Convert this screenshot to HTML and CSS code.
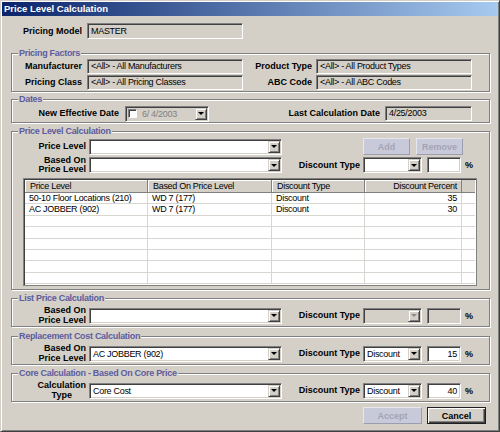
FILE: index.html
```html
<!DOCTYPE html>
<html>
<head>
<meta charset="utf-8">
<title>Price Level Calculation</title>
<link rel="stylesheet" href="styles.css">
</head>
<body>
<div class="window">
  <div class="titlebar">Price Level Calculation</div>
  <div class="content">
    <div class="row model">
      <span class="lbl w71">Pricing Model</span>
      <div class="field ro h16 w156 ml5">MASTER</div>
    </div>

    <fieldset class="group g-factors">
      <legend>Pricing Factors</legend>
      <div class="row r15">
        <span class="lbl w70">Manufacturer</span>
        <div class="field ro w156 ml5">&lt;All&gt; - All Manufacturers</div>
        <span class="lbl w69">Product Type</span>
        <div class="field ro w156 ml4">&lt;All&gt; - All Product Types</div>
      </div>
      <div class="row r15 mt1">
        <span class="lbl w70">Pricing Class</span>
        <div class="field ro w156 ml5">&lt;All&gt; - All Pricing Classes</div>
        <span class="lbl w69">ABC Code</span>
        <div class="field ro w156 ml4">&lt;All&gt; - All ABC Codes</div>
      </div>
    </fieldset>

    <fieldset class="group g-dates">
      <legend>Dates</legend>
      <div class="row r15">
        <span class="lbl w107">New Effective Date</span>
        <div class="combo dtp w84 ml6"><span class="chk"></span><span class="val dt">6/ 4/2003</span><span class="arrow"></span></div>
        <span class="lbl w171">Last Calculation Date</span>
        <div class="field ro w87 ml5">4/25/2003</div>
      </div>
    </fieldset>

    <fieldset class="group g-calc">
      <legend>Price Level Calculation</legend>
      <div class="row r17">
        <span class="lbl w74">Price Level</span>
        <div class="combo w193 ml3"><span class="val"></span><span class="arrow"></span></div>
        <button class="btn dis ml81">Add</button>
        <button class="btn dis ml6">Remove</button>
      </div>
      <div class="row r16 mt2">
        <span class="lbl two w74">Based On<br>Price Level</span>
        <div class="combo w193 ml3"><span class="val"></span><span class="arrow"></span></div>
        <span class="lbl w78">Discount Type</span>
        <div class="combo w59 ml3"><span class="val"></span><span class="arrow"></span></div>
        <div class="field h16 w34 ml5"></div>
        <span class="pct">%</span>
      </div>
      <div class="grid">
        <div class="grow head">
          <span class="c c1">Price Level</span>
          <span class="c c2">Based On Price Level</span>
          <span class="c c3">Discount Type</span>
          <span class="c c4 num">Discount Percent</span>
          <span class="c c5"></span>
        </div>
        <div class="grow">
          <span class="c c1">50-10 Floor Locations (210)</span>
          <span class="c c2">WD 7 (177)</span>
          <span class="c c3">Discount</span>
          <span class="c c4 num">35</span>
          <span class="c c5"></span>
        </div>
        <div class="grow">
          <span class="c c1">AC JOBBER (902)</span>
          <span class="c c2">WD 7 (177)</span>
          <span class="c c3">Discount</span>
          <span class="c c4 num">30</span>
          <span class="c c5"></span>
        </div>
        <div class="grow"><span class="c c1"></span><span class="c c2"></span><span class="c c3"></span><span class="c c4"></span><span class="c c5"></span></div>
        <div class="grow"><span class="c c1"></span><span class="c c2"></span><span class="c c3"></span><span class="c c4"></span><span class="c c5"></span></div>
        <div class="grow"><span class="c c1"></span><span class="c c2"></span><span class="c c3"></span><span class="c c4"></span><span class="c c5"></span></div>
        <div class="grow"><span class="c c1"></span><span class="c c2"></span><span class="c c3"></span><span class="c c4"></span><span class="c c5"></span></div>
        <div class="grow"><span class="c c1"></span><span class="c c2"></span><span class="c c3"></span><span class="c c4"></span><span class="c c5"></span></div>
        <div class="grow"><span class="c c1"></span><span class="c c2"></span><span class="c c3"></span><span class="c c4"></span><span class="c c5"></span></div>
      </div>
    </fieldset>

    <fieldset class="group g-small g-list">
      <legend>List Price Calculation</legend>
      <div class="row r19">
        <span class="lbl two w74">Based On<br>Price Level</span>
        <div class="combo w193 ml3"><span class="val"></span><span class="arrow"></span></div>
        <span class="lbl w78">Discount Type</span>
        <div class="combo dis w59 ml3"><span class="val"></span><span class="arrow"></span></div>
        <div class="field ro h16 w34 ml5"></div>
        <span class="pct">%</span>
      </div>
    </fieldset>

    <fieldset class="group g-small g-repl">
      <legend>Replacement Cost Calculation</legend>
      <div class="row r19">
        <span class="lbl two w74">Based On<br>Price Level</span>
        <div class="combo w193 ml3"><span class="val">AC JOBBER (902)</span><span class="arrow"></span></div>
        <span class="lbl w78">Discount Type</span>
        <div class="combo w59 ml3"><span class="val">Discount</span><span class="arrow"></span></div>
        <div class="field h16 w34 ml5 num">15</div>
        <span class="pct">%</span>
      </div>
    </fieldset>

    <fieldset class="group g-small g-core">
      <legend>Core Calculation - Based On Core Price</legend>
      <div class="row r19">
        <span class="lbl w74 stack"><span class="ctr">Calculation<br>Type</span></span>
        <div class="combo w193 ml3"><span class="val">Core Cost</span><span class="arrow"></span></div>
        <span class="lbl w78">Discount Type</span>
        <div class="combo w59 ml3"><span class="val">Discount</span><span class="arrow"></span></div>
        <div class="field h16 w34 ml5 num">40</div>
        <span class="pct">%</span>
      </div>
    </fieldset>

    <div class="row actions">
      <button class="btn dis wide">Accept</button>
      <button class="btn def wide ml5">Cancel</button>
    </div>
  </div>
</div>
</body>
</html>
```

FILE: styles.css
```css
* { box-sizing: border-box; }
html, body { margin: 0; padding: 0; }
body {
  width: 500px;
  height: 432px;
  overflow: hidden;
  background: #d4d0c8;
  font-family: "Liberation Sans", Arial, sans-serif;
  font-size: 9px;
  color: #000;
}

.window {
  width: 500px;
  height: 432px;
  border: 1px solid;
  border-color: #d4d0c8 #404040 #404040 #d4d0c8;
  box-shadow: inset 1px 1px #fff, inset -1px -1px #808080;
  padding: 1px;
  display: flex;
  flex-direction: column;
}

.titlebar {
  height: 14px;
  flex: none;
  background: linear-gradient(to right, #0a246a, #a6caf0);
  color: #fff;
  font-weight: bold;
  font-size: 9.5px;
  line-height: 14px;
  padding-left: 2px;
  white-space: nowrap;
}

.content {
  padding-left: 9px;
  display: flex;
  flex-direction: column;
  align-items: flex-start;
}

.row { display: flex; align-items: center; flex: none; }
.r15 { height: 15px; }
.r16 { height: 16px; }
.r17 { height: 17px; }
.r19 { height: 19px; }
.mt1 { margin-top: 1px; }
.mt2 { margin-top: 2px; }
.model { margin-top: 7px; height: 16px; }

.ml3 { margin-left: 3px; }
.ml4 { margin-left: 4px; }
.ml5 { margin-left: 5px; }
.ml6 { margin-left: 6px; }
.ml81 { margin-left: 81px; }

.w34 { width: 34px; }
.w59 { width: 59px; }
.w69 { width: 69px; }
.w70 { width: 70px; }
.w71 { width: 71px; }
.w74 { width: 74px; }
.w78 { width: 78px; }
.w84 { width: 84px; }
.w87 { width: 87px; }
.w107 { width: 107px; }
.w156 { width: 156px; }
.w171 { width: 171px; }
.w193 { width: 193px; }

.lbl {
  flex: none;
  font-weight: bold;
  text-align: right;
  white-space: nowrap;
  line-height: 11px;
}
.lbl.two { line-height: 9.5px; }
.lbl.stack { display: flex; justify-content: flex-end; }
.lbl .ctr { text-align: center; line-height: 9.5px; }

.field {
  flex: none;
  height: 15px;
  border: 1px solid;
  border-color: #808080 #fff #fff #808080;
  box-shadow: inset 1px 1px #404040, inset -1px -1px #d4d0c8;
  padding: 0 3px;
  line-height: 13px;
  letter-spacing: -0.3px;
  white-space: nowrap;
  overflow: hidden;
  background: #fff;
}
.field.h16 { height: 16px; line-height: 14px; }
.field.ro { background: #d4d0c8; }
.num { text-align: right; }

.combo {
  flex: none;
  height: 16px;
  display: flex;
  border: 1px solid;
  border-color: #808080 #fff #fff #808080;
  box-shadow: inset 1px 1px #404040, inset -1px -1px #d4d0c8;
  padding: 1px;
  background: #fff;
}
.combo .val {
  flex: 1;
  min-width: 0;
  padding-left: 2px;
  line-height: 12px;
  letter-spacing: -0.3px;
  white-space: nowrap;
  overflow: hidden;
}
.arrow {
  flex: none;
  width: 12px;
  align-self: stretch;
  background: #d4d0c8;
  border: 1px solid;
  border-color: #d4d0c8 #404040 #404040 #d4d0c8;
  box-shadow: inset 1px 1px #fff, inset -1px -1px #808080;
  display: flex;
  align-items: center;
  justify-content: center;
}
.arrow::after {
  content: "";
  border-left: 3px solid transparent;
  border-right: 3px solid transparent;
  border-top: 3px solid #000;
}
.combo.dis { background: #d4d0c8; }
.combo.dis .arrow::after { border-top-color: #8a8a8a; }

.dtp { background: #d4d0c8; align-items: center; }
.chk {
  flex: none;
  width: 9px;
  height: 9px;
  margin-left: 1px;
  background: #fff;
  border: 1px solid;
  border-color: #808080 #fff #fff #808080;
  box-shadow: inset 1px 1px #404040;
}
.dtp .dt {
  color: #808080;
  white-space: pre;
  padding-left: 5px;
  align-self: stretch;
}

.pct { margin-left: 4px; font-weight: bold; }

.btn {
  flex: none;
  height: 17px;
  width: 47px;
  padding: 0;
  font-family: inherit;
  font-size: 9px;
  font-weight: bold;
  display: flex;
  align-items: center;
  justify-content: center;
  border: 1px solid;
  border-color: #fff #404040 #404040 #fff;
  box-shadow: inset -1px -1px #808080;
  background: #d4d0c8;
  color: #000;
}
.btn.dis {
  background: #c9cad9;
  color: #a3a4b6;
  border-color: #e6e6ee #9c9db0 #9c9db0 #e6e6ee;
  box-shadow: none;
}
.btn.def {
  border: 1px solid #202020;
  box-shadow: inset 1px 1px #fff, inset -1px -1px #404040, inset -2px -2px #808080;
}
.btn.wide { width: 59px; }

.group {
  flex: none;
  margin: 0;
  padding: 0 0 1px 0;
  width: 479px;
  min-width: 0;
  border: 1px solid #808080;
  box-shadow: 1px 1px #fff, inset 1px 1px #fff;
}
.group legend {
  margin-left: 6px;
  padding: 0 1px;
  height: 11px;
  line-height: 11px;
  font-weight: bold;
  font-size: 9px;
  letter-spacing: -0.3px;
  color: #5c5c9e;
  background: #d4d0c8;
}
.g-factors { margin-top: 9px; }
.g-dates { margin-top: 2px; padding-top: 1px; }
.g-calc { margin-top: 3px; padding-top: 1px; padding-bottom: 3px; }
.g-list { margin-top: 3px; }
.g-repl { margin-top: 4px; }
.g-core { margin-top: 3px; }
.g-small { padding-top: 2px; }

.grid {
  margin: 5px 0 0 11px;
  width: 454px;
  height: 108px;
  border: 1px solid #808080;
  box-shadow: inset 1px 1px #404040;
  padding: 1px;
  background: #fff;
  display: flex;
  flex-direction: column;
  overflow: hidden;
}
.grow {
  display: flex;
  flex: none;
  height: 11.4px;
  border-bottom: 1px solid #d8d6d0;
}
.grow.head {
  height: 13px;
  background: #d4d0c8;
  border-bottom: 1px solid #808080;
}
.c {
  flex: none;
  height: 100%;
  padding-left: 4px;
  line-height: 10px;
  letter-spacing: -0.3px;
  white-space: nowrap;
  overflow: hidden;
  border-right: 1px solid #d8d6d0;
}
.c1 { width: 123px; }
.c2 { width: 124px; }
.c3 { width: 93px; }
.c4 { width: 97px; }
.c5 { flex: 1; border-right: 0; }
.c.num { text-align: right; padding-right: 4px; }
.head .c {
  line-height: 12px;
  padding-left: 5px;
  border-right: 1px solid #808080;
  box-shadow: inset 1px 1px #fff;
}
.head .c.num { padding-right: 4px; }
.head .c5 { border-right: 0; box-shadow: none; }

.actions {
  margin-top: 5px;
  width: 479px;
  justify-content: flex-end;
  padding-right: 4px;
}
```
